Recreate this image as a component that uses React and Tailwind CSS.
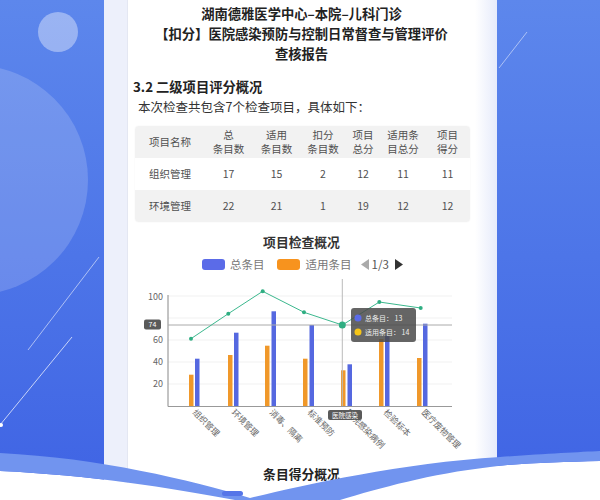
import React from "react";

const blueTops = [359.7, 333.7, 312.3, 326, 365.3, 336.7, 324.7];
const orangeTops = [375.7, 356, 346.7, 359.7, 371.3, 340, 359];
const orangeX = [189, 228, 265, 303, 341, 379, 417];
const blueX = [195, 234, 271.5, 309.5, 347.5, 385, 423];
const linePts = [
  [191, 339.7],
  [228.3, 314.7],
  [262.7, 292.3],
  [304, 313.3],
  [342.3, 326],
  [379.3, 303],
  [420.7, 309],
];
const xLabels = ["组织管理", "环境管理", "消毒、隔离", "标准预防", "医院感染病例", "检验标本", "医疗废物管理"];
const labelX = [192, 231, 269, 307, 345, 383, 421];

function Chart() {
  return (
    <svg width="347" height="190" viewBox="128 276 347 190" className="block">
      {[297, 319, 341, 363, 385].map((y) => (
        <line key={y} x1="168" x2="452" y1={y} y2={y} stroke="#f1f1f1" strokeWidth="1" />
      ))}
      <line x1="168" x2="168" y1="296" y2="407.5" stroke="#888" strokeWidth="1" />
      {[
        ["100", 300.5],
        ["60", 344],
        ["40", 366],
        ["20", 388],
      ].map(([t, y]) => (
        <text key={t} x="163" y={y} fontSize="9" fill="#666" textAnchor="end">
          {t}
        </text>
      ))}
      {orangeTops.map((t, i) => (
        <rect key={"o" + i} x={orangeX[i]} y={t} width="4.5" height={407.5 - t} fill="#f0982a" />
      ))}
      {blueTops.map((t, i) => (
        <rect key={"b" + i} x={blueX[i]} y={t} width="4.5" height={407.5 - t} fill="#5568e0" />
      ))}
      <line x1="168" x2="452" y1="407.5" y2="407.5" stroke="#999" strokeWidth="1" />
      <line x1="342.3" x2="342.3" y1="280" y2="407" stroke="#bbb" strokeWidth="1" />
      <line x1="168" x2="452" y1="326" y2="326" stroke="#aaa" strokeWidth="1" />
      <polyline
        points={linePts.map((p) => p.join(",")).join(" ")}
        fill="none"
        stroke="#3cb88e"
        strokeWidth="1"
      />
      {linePts.map((p, i) => (
        <circle key={"c" + i} cx={p[0]} cy={p[1]} r={i === 4 ? 3.5 : 2} fill="#2fae82" />
      ))}
      <rect x="144" y="320.5" width="17" height="10" rx="2" fill="#5a5a5a" />
      <text x="152.5" y="328" fontSize="7" fill="#fff" textAnchor="middle">
        74
      </text>
      {xLabels.map((t, i) => (
        <text
          key={t}
          transform={`translate(${labelX[i]},${414}) rotate(45)`}
          fontSize="8.5"
          fill="#666"
        >
          {t}
        </text>
      ))}
      <rect x="328" y="411" width="34" height="10" rx="2" fill="#5a5a5a" />
      <text x="345" y="418.5" fontSize="6.5" fill="#fff" textAnchor="middle">
        医院感染
      </text>
      <rect x="351" y="309" width="65" height="34" rx="3" fill="#4a4a4a" opacity="0.85" />
      <circle cx="358" cy="319" r="3.5" fill="#5b6be8" />
      <text x="365" y="321.5" fontSize="7" fill="#eee">
        总条目：  13
      </text>
      <circle cx="358" cy="333" r="3.5" fill="#f5c518" />
      <text x="365" y="335.5" fontSize="7" fill="#eee">
        适用条目：  14
      </text>
    </svg>
  );
}

function Table() {
  const cols = "grid grid-cols-[70px_47px_49px_44px_36px_44px_45px]";
  const rows = [
    ["组织管理", "17", "15", "2", "12", "11", "11"],
    ["环境管理", "22", "21", "1", "19", "12", "12"],
  ];
  const header = ["项目名称", ["总", "条目数"], ["适用", "条目数"], ["扣分", "条目数"], ["项目", "总分"], ["适用条", "目总分"], ["项目", "得分"]];
  return (
    <div className="mt-[9px] ml-[7px] w-[335px] rounded-[4px] overflow-hidden text-[10.5px] text-[#505050] shadow-[0_0_2px_rgba(0,0,0,0.06)]">
      <div className={`${cols} h-[32px] bg-[#f2f2f2] items-center text-center leading-[14px]`}>
        {header.map((h, i) => (
          <div key={i}>
            {Array.isArray(h) ? (
              <>
                {h[0]}
                <br />
                {h[1]}
              </>
            ) : (
              h
            )}
          </div>
        ))}
      </div>
      {rows.map((r, ri) => (
        <div key={ri} className={`${cols} h-[32px] items-center text-center ${ri === 1 ? "bg-[#f2f2f2]" : "bg-white"}`}>
          {r.map((c, ci) => (
            <div key={ci}>{c}</div>
          ))}
        </div>
      ))}
    </div>
  );
}

export default function App() {
  return (
    <div className="relative w-[600px] h-[500px] overflow-hidden bg-linear-to-b from-[#5d87ec] to-[#3f63e4] font-['Noto_Sans_CJK_SC',sans-serif]">
      <svg className="absolute inset-0 pointer-events-none" width="600" height="500" viewBox="0 0 600 500">
        <circle cx="-27" cy="180" r="115" fill="#ffffff" opacity="0.17" />
        <circle cx="58" cy="32" r="20" fill="#ffffff" opacity="0.38" />
        <line x1="99" y1="257" x2="28" y2="350" stroke="#ffffff" strokeOpacity="0.55" strokeWidth="1" />
        <line x1="72" y1="337" x2="0" y2="425" stroke="#ffffff" strokeOpacity="0.7" strokeWidth="1" />
        <circle cx="1" cy="425" r="2" fill="#ffffff" />
        <line x1="527" y1="32" x2="499" y2="68" stroke="#ffffff" strokeOpacity="0.5" strokeWidth="1" />
      </svg>

      <div className="relative ml-[104px] w-[393px] h-[500px] flex">
        <div className="w-[24px] bg-[#edf0fb] border-r border-[#e4e7f2]" />
        <div className="w-[347px] bg-white flex flex-col">
          <div className="pt-[4px] text-center font-bold text-[13.3px] leading-[20px] text-[#222]">
            <div>湖南德雅医学中心–本院–儿科门诊</div>
            <div>【扣分】医院感染预防与控制日常督查与管理评价</div>
            <div>查核报告</div>
          </div>
          <div className="mt-[13px] pl-[5px] font-bold text-[13.3px] leading-[20px] text-[#222]">3.2 二级项目评分概况</div>
          <div className="pl-[10px] text-[12.5px] leading-[20px] text-[#333]">本次检查共包含7个检查项目，具体如下：</div>
          <Table />
          <div className="mt-[11px] text-center font-bold text-[12.8px] leading-[18px] text-[#333]">项目检查概况</div>
          <div className="mt-[6px] h-[14px] flex items-center pl-[74px] text-[11.5px] text-[#777] leading-[14px]">
            <div className="w-[23px] h-[11px] rounded-[3px] bg-[#5b6be8]" />
            <span className="ml-[5px]">总条目</span>
            <div className="ml-[12px] w-[23px] h-[11px] rounded-[3px] bg-[#f7931e]" />
            <span className="ml-[6px]">适用条目</span>
            <svg className="ml-[9px]" width="8" height="11" viewBox="0 0 8 11">
              <polygon points="8,0 8,11 0,5.5" fill="#aaa" />
            </svg>
            <span className="ml-[3px] text-[#555]">1/3</span>
            <svg className="ml-[6px]" width="8" height="11" viewBox="0 0 8 11">
              <polygon points="0,0 0,11 8,5.5" fill="#333" />
            </svg>
          </div>
          <div className="mt-[4px]">
            <Chart />
          </div>
          <div className="text-center font-bold text-[12.8px] leading-[18px] text-[#222]">条目得分概况</div>
        </div>
        <div className="w-[22px] bg-linear-to-r from-white to-[#e6ebfb]" />
      </div>

      <svg className="absolute inset-0 pointer-events-none" width="600" height="500" viewBox="0 0 600 500">
        <path
          d="M0,471 C90,475 170,488 235,500 L340,500 C380,488 430,474 490,467 C520,463 560,462 600,461 L600,500 L0,500 Z"
          fill="#ffffff"
        />
        <path
          d="M0,453 C100,458 190,480 250,498 C300,486 400,463 500,457 C540,454 580,452 600,451 L600,461 C560,462 520,463 490,467 C430,474 380,488 340,500 L235,500 C170,488 90,475 0,471 Z"
          fill="#7194ef"
        />
        <rect x="222" y="491" width="21" height="5" rx="2.5" fill="#5575e8" />
      </svg>
    </div>
  );
}
